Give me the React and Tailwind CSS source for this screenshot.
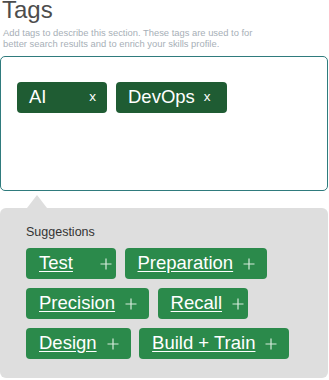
import React from 'react'

const tags = [
  { label: 'AI', extra: 'min-w-[90px] justify-between pr-[11px]' },
  { label: 'DevOps', extra: 'pr-[16px]' },
]

const suggestions = [
  { label: 'Test', short: true },
  { label: 'Preparation' },
  { label: 'Precision' },
  { label: 'Recall', short: true },
  { label: 'Design' },
  { label: 'Build + Train' },
]

function PlusIcon() {
  return (
    <svg width="12" height="12" viewBox="0 0 12 12" className="shrink-0">
      <path d="M6 0.5v11M0.5 6h11" stroke="#d6ebdc" strokeWidth="1.2" fill="none" />
    </svg>
  )
}

export default function App() {
  return (
    <div className="w-[329px] h-[380px] overflow-hidden bg-white font-['Liberation_Sans',Arial,sans-serif]">
      <h1 className="-mt-[2px] ml-[2px] text-[24px] leading-[24px] text-[#4d4d4d]">Tags</h1>
      <p className="mt-[5px] ml-[3px] text-[9.4px] leading-[11px] text-[#a7afb7]">
        Add tags to describe this section. These tags are used to for
        <br />
        better search results and to enrich your skills profile.
      </p>

      {/* tag input */}
      <div className="mt-[7px] w-[328px] h-[135px] rounded-[5px] border-[1.5px] border-[#2f7b7d] pl-[16px] pt-[24.5px]">
        <div className="flex gap-[9px]">
          {tags.map((t) => (
            <div
              key={t.label}
              className={`flex items-center gap-[9px] h-[31px] pl-[12px] rounded-[4px] bg-[#1f5c33] text-white ${t.extra}`}
            >
              <span className="text-[18.5px] leading-none">{t.label}</span>
              <span className="text-[13.5px] leading-none">x</span>
            </div>
          ))}
        </div>
      </div>

      {/* suggestions popover */}
      <div className="mt-[4px] ml-[27px] w-0 h-0 border-l-[10px] border-r-[10px] border-b-[13px] border-l-transparent border-r-transparent border-b-[#dedede]" />
      <div className="w-[328px] h-[170px] rounded-[6px] bg-[#dedede] pl-[26px] pr-[20px] pt-[17px]">
        <div className="text-[12.5px] leading-[14px] text-[#333333]">Suggestions</div>
        <div className="mt-[9px] flex flex-wrap gap-x-[8.5px] gap-y-[9px]">
          {suggestions.map((s) => (
            <button
              key={s.label}
              className={`flex items-center h-[31px] pl-[13px] rounded-[4px] bg-[#2b8a4b] text-white ${
                s.short ? 'min-w-[90px] justify-between pr-[4px]' : 'gap-[10px] pr-[12px]'
              }`}
            >
              <span className="text-[18.5px] leading-none underline underline-offset-[2px]">{s.label}</span>
              <PlusIcon />
            </button>
          ))}
        </div>
      </div>
    </div>
  )
}
